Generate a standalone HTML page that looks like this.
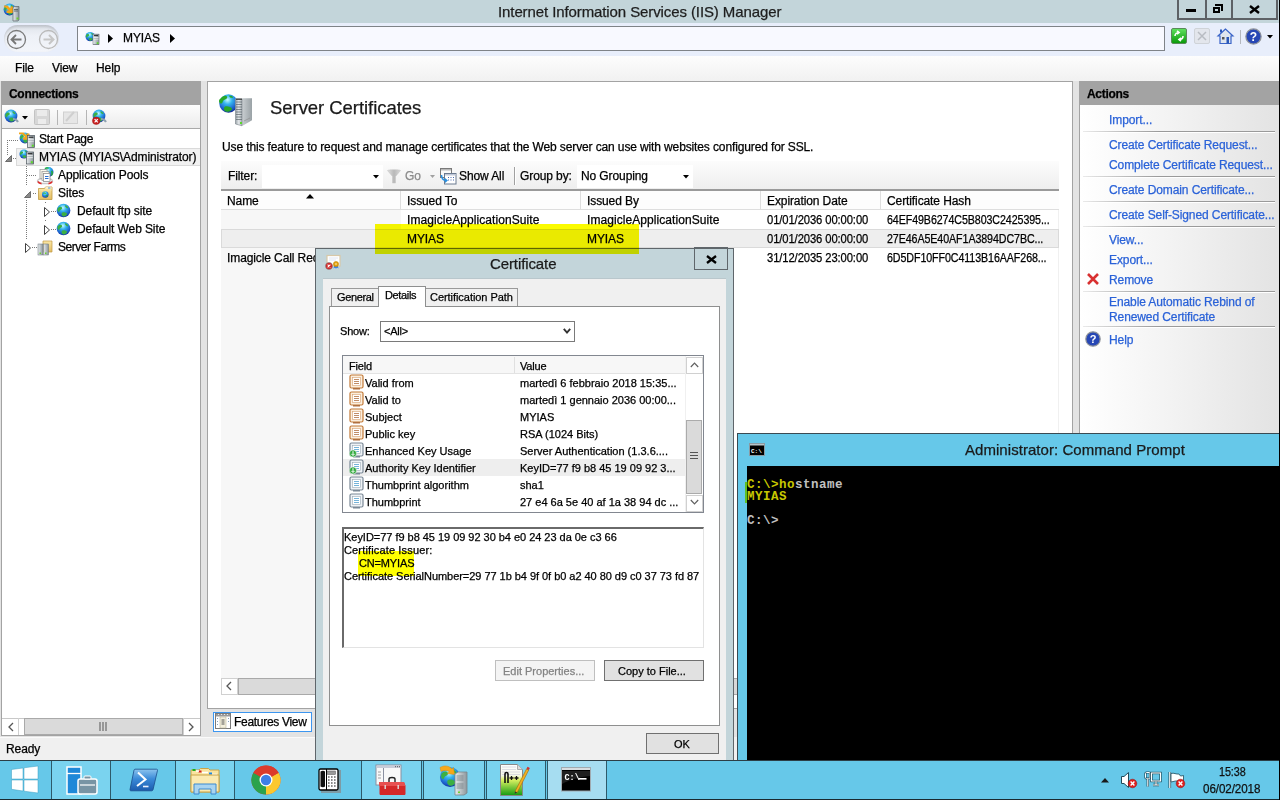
<!DOCTYPE html>
<html><head><meta charset="utf-8">
<style>
*{margin:0;padding:0;box-sizing:border-box}
html,body{width:1280px;height:800px;overflow:hidden;background:#e3e3e3;font-family:"Liberation Sans",sans-serif;font-size:12px;color:#000}
.a{position:absolute}
.t{position:absolute;white-space:nowrap;line-height:1;letter-spacing:-0.1px;-webkit-text-stroke:0.25px currentColor}
.lnk{color:#2a62d8}
svg.a{overflow:visible}
.dotv{position:absolute;width:1px;background:repeating-linear-gradient(#7a7a7a 0 1px,transparent 1px 2px)}
.doth{position:absolute;height:1px;background:repeating-linear-gradient(90deg,#7a7a7a 0 1px,transparent 1px 2px)}
</style></head><body>
<svg width="0" height="0" style="position:absolute">
<defs>
<radialGradient id="gGlobe" cx=".45" cy=".3" r=".72"><stop offset="0" stop-color="#c8fbff"/><stop offset=".35" stop-color="#34b4ee"/><stop offset=".8" stop-color="#1a58c8"/><stop offset="1" stop-color="#142c90"/></radialGradient>
<linearGradient id="gSrv" x1="0" x2="1"><stop offset="0" stop-color="#e8ecee"/><stop offset="1" stop-color="#8c969c"/></linearGradient>
<linearGradient id="gFold" x1="0" x2="0" y1="0" y2="1"><stop offset="0" stop-color="#fbe7a6"/><stop offset="1" stop-color="#e2bd62"/></linearGradient>
<symbol id="globe" viewBox="0 0 16 16">
<circle cx="8" cy="8" r="7.3" fill="url(#gGlobe)"/>
<path d="M3 4.5c1.5-1 3-.5 3.5.5s-1 2-2 2.5-.5 2-1.5 2S1.5 8 1.5 7 2 5.2 3 4.5zM7 10c1.5-.5 3.5 0 4.5 1s-.5 3-2.5 3.3S6 13 6 12s0-1.7 1-2zM10 2.5c1 .3 2.5 1.3 3 2.5s-1 .5-2 0-2-2-1-2.5z" fill="#3cb043"/>
</symbol>
<symbol id="server" viewBox="0 0 10 16"><rect x=".5" y=".5" width="9" height="15" fill="url(#gSrv)" stroke="#4e585e" stroke-width=".9"/><rect x="2" y="2" width="6" height="1.3" fill="#1a1a1a"/><path d="M1.5 5.3h7M1.5 7.5h7" stroke="#fff" stroke-width="1"/><path d="M1.5 6.4h7" stroke="#8a949a" stroke-width=".6"/><rect x="6" y="12" width="2.5" height="2.5" fill="#5ad82a"/></symbol>
<symbol id="globesrv" viewBox="0 0 16 16"><use href="#globe" x="0" y="1" width="11" height="11"/><use href="#server" x="8" y="3" width="7.5" height="13"/></symbol>
<symbol id="folder" viewBox="0 0 16 16">
<path d="M1 3h5l1.5 1.5H15V14H1z" fill="url(#gFold)" stroke="#c09a42" stroke-width=".8"/>
<path d="M1 6h14" stroke="#f7dd95" stroke-width="1"/>
</symbol>
<symbol id="tri" viewBox="0 0 6 6"><path d="M6 0V6H0z" fill="#404040"/></symbol>
<symbol id="trio" viewBox="0 0 6 10"><path d="M.5 .5L5.5 5 .5 9.5z" fill="#fff" stroke="#404040" stroke-width="1"/></symbol>
</defs></svg>

<!-- ============ TITLE BAR ============ -->
<div class="a" style="left:0;top:0;width:1280px;height:23px;background:#c3d5da"></div>
<svg class="a" style="left:2px;top:2px" width="18" height="18"><use href="#globe" x="1" y="1" width="13" height="13"/><path d="M2 3.5h3.5l3 3V4.5h2.5v6.5H4.5V8.5h2.2L3.6 5.5H2z" fill="#f2a41a"/><path d="M11 5.5l1.5-1h4.5v13.5l-1.5 1H11z" fill="url(#gSrv)" stroke="#5a656b" stroke-width=".7"/><path d="M12 7.5h4M12 9h4" stroke="#4a555b" stroke-width=".8"/><rect x="14.5" y="15.5" width="2" height="2" fill="#6bd12e"/></svg>
<div class="t" style="left:498px;top:4px;font-size:15px;color:#1e1e1e;letter-spacing:-0.1px">Internet Information Services (IIS) Manager</div>
<div class="a" style="left:1177px;top:-2px;width:101px;height:22px;border:2px solid #5d6165;border-top:none"></div>
<div class="a" style="left:1205px;top:0;width:2px;height:20px;background:#5d6165"></div>
<div class="a" style="left:1231px;top:0;width:2px;height:20px;background:#5d6165"></div>
<div class="a" style="left:1186px;top:9px;width:10px;height:3px;background:#000"></div>
<div class="a" style="left:1213px;top:7px;width:7px;height:6px;border:2px solid #000"></div>
<div class="a" style="left:1215px;top:4px;width:8px;height:7px;border-top:2px solid #000;border-right:2px solid #000"></div>
<svg class="a" style="left:1249px;top:5px" width="11" height="9"><path d="M1 1L10 8M10 1L1 8" stroke="#000" stroke-width="2.4"/></svg>


<!-- ============ NAV BAR ============ -->
<div class="a" style="left:0;top:23px;width:1279px;height:33px;background:#e8eefb"></div>
<div class="a" style="left:4px;top:25px;width:55px;height:27px;border-radius:14px;background:linear-gradient(#dfe3ea,#eef1f7 40%,#f3f5fa);box-shadow:inset 0 2px 3px rgba(120,125,135,.35)"></div>
<svg class="a" style="left:6px;top:29px" width="22" height="22"><circle cx="10.5" cy="10.5" r="9" fill="none" stroke="#7a7a7a" stroke-width="1.3"/><path d="M5.5 10.5h10M10 6l-4.5 4.5L10 15" fill="none" stroke="#777" stroke-width="1.8"/></svg>
<svg class="a" style="left:38px;top:29px" width="22" height="22"><circle cx="10.5" cy="10.5" r="9" fill="none" stroke="#b9b9b9" stroke-width="1.3"/><path d="M5.5 10.5h10M11 6l4.5 4.5L11 15" fill="none" stroke="#c6c6c6" stroke-width="2"/></svg>
<div class="a" style="left:77px;top:26px;width:1088px;height:25px;background:#f8f9ff;border:1px solid #7f8388"></div>
<svg class="a" style="left:85px;top:30px" width="15" height="16"><use href="#globesrv" width="15" height="16"/></svg>
<svg class="a" style="left:108px;top:34px" width="6" height="9"><path d="M0 0L5 4.5 0 9z" fill="#000"/></svg>
<div class="t" style="left:123px;top:32px">MYIAS</div>
<svg class="a" style="left:170px;top:34px" width="6" height="9"><path d="M0 0L5 4.5 0 9z" fill="#000"/></svg>
<!-- right nav icons -->
<div class="a" style="left:1171px;top:28px;width:16px;height:16px;border-radius:2px;background:linear-gradient(#5ee05e,#0a9a0a);border:1px solid #5a8a5a"></div>
<svg class="a" style="left:1173px;top:30px" width="12" height="12"><path d="M2 6c0-2 1.5-3.5 4-3.5M10 6c0 2-1.5 3.5-4 3.5M4 1L6 2.5 4 4M8 8L6 9.5 8 11" fill="none" stroke="#fff" stroke-width="1.6"/></svg>
<div class="a" style="left:1194px;top:28px;width:16px;height:16px;border-radius:2px;background:#e3e6ec;border:1px solid #cfd3d8"></div>
<svg class="a" style="left:1197px;top:31px" width="10" height="10"><path d="M1 1L9 9M9 1L1 9" stroke="#b8bcc2" stroke-width="1.5"/></svg>
<svg class="a" style="left:1217px;top:28px" width="17" height="16"><path d="M8.5 1L1 8h2v7.5h11V8h2z" fill="#dfe6ee" stroke="#3a64c8" stroke-width="1.2"/><rect x="5" y="9" width="2.5" height="2.5" fill="#555"/><rect x="9.5" y="9" width="2.5" height="6.5" fill="#2a58b8"/><rect x="3" y="1.5" width="2" height="3" fill="#2a58b8"/></svg>
<div class="a" style="left:1240px;top:30px;width:1px;height:14px;background:#b4b8be"></div>
<svg class="a" style="left:1245px;top:28px" width="17" height="17"><circle cx="8.5" cy="8.5" r="7.6" fill="#2747b5" stroke="#8e9298" stroke-width="1.3"/><text x="8.5" y="12.6" font-family="Liberation Sans" font-weight="bold" font-size="12" fill="#fff" text-anchor="middle">?</text></svg>
<svg class="a" style="left:1267px;top:35px" width="6" height="4"><path d="M0 0h6L3 3.5z" fill="#000"/></svg>

<!-- ============ MENU BAR ============ -->
<div class="a" style="left:0;top:56px;width:1279px;height:25px;background:linear-gradient(#fdfdfd,#f1f1f1)"></div>
<div class="t" style="left:15px;top:62px">File</div>
<div class="t" style="left:52px;top:62px">View</div>
<div class="t" style="left:96px;top:62px">Help</div>

<!-- ============ CONNECTIONS ============ -->
<div class="a" style="left:1px;top:81px;width:200px;height:655px;background:#fff;border:1px solid #a3a3a3"></div>
<div class="a" style="left:2px;top:81px;width:198px;height:24px;background:#a3a3a3"></div>
<div class="t" style="left:9px;top:88px;font-weight:bold;letter-spacing:-0.3px">Connections</div>
<div class="a" style="left:2px;top:105px;width:198px;height:24px;background:linear-gradient(#fdfdfd,#ebebeb);border-bottom:1px solid #a9a9a9"></div>
<!-- conn toolbar icons -->
<svg class="a" style="left:4px;top:109px" width="17" height="16"><use href="#globe" width="14" height="14"/><path d="M9 10c2 0 4 1 5 3" stroke="#8fa2b0" stroke-width="2" fill="none"/></svg>
<svg class="a" style="left:22px;top:116px" width="6" height="4"><path d="M0 0h6L3 3.5z" fill="#000"/></svg>
<svg class="a" style="left:34px;top:109px" width="16" height="16"><rect x=".5" y=".5" width="15" height="15" rx="1" fill="#d7d7d7" stroke="#c3c3c3"/><rect x="3" y="1" width="10" height="6" fill="#ebebeb"/><rect x="4" y="10" width="8" height="5" fill="#ececec"/></svg>
<div class="a" style="left:57px;top:110px;width:1px;height:15px;background:#b5b5b5"></div>
<svg class="a" style="left:63px;top:110px" width="15" height="14"><rect x=".5" y="2" width="14" height="11.5" fill="#e6e6e6" stroke="#d0d0d0"/><path d="M3 11l8-9" stroke="#cfcfcf" stroke-width="2"/></svg>
<div class="a" style="left:86px;top:110px;width:1px;height:15px;background:#b5b5b5"></div>
<svg class="a" style="left:92px;top:109px" width="17" height="16"><use href="#globe" width="14" height="14"/><path d="M9 10c2 0 4 1 5 3" stroke="#8fa2b0" stroke-width="2" fill="none"/><circle cx="4.2" cy="11.8" r="3.8" fill="#c81e1e" stroke="#901010" stroke-width=".4"/><path d="M2.6 10.2l3.2 3.2M5.8 10.2l-3.2 3.2" stroke="#fff" stroke-width="1.2"/></svg>

<!-- tree -->
<div class="doth" style="left:7px;top:140px;width:11px"></div>
<div class="dotv" style="left:7px;top:140px;height:16px"></div>
<svg class="a" style="left:18px;top:131px" width="17" height="17"><use href="#globe" x="1" y="1" width="12" height="12"/><path d="M1 1.5h4.5l3 3V2.5h2.8v6.3H5V6.2h2.3L4.2 3.3H1z" fill="#f2a41a"/><use href="#server" x="9" y="4" width="8" height="13"/></svg>
<div class="t" style="left:39px;top:133px;letter-spacing:-0.25px">Start Page</div>

<div class="a" style="left:16px;top:148px;width:184px;height:18px;background:#f1f1f1;border:1px solid #dadada;border-right:none"></div>
<svg class="a" style="left:5px;top:155px" width="7" height="7"><path d="M6.5 .5V6.5H.5z" fill="#8a8a8a" stroke="#555" stroke-width=".8"/></svg>
<div class="doth" style="left:13px;top:158px;width:4px"></div>
<svg class="a" style="left:19px;top:149px" width="16" height="17"><use href="#globe" x="0" y="0" width="10" height="10"/><use href="#server" x="7" y="2" width="8" height="14"/></svg>
<div class="t" style="left:39px;top:151px">MYIAS (MYIAS\Administrator)</div>

<div class="dotv" style="left:26px;top:166px;height:20px"></div>
<div class="dotv" style="left:26px;top:200px;height:39px"></div>
<div class="doth" style="left:27px;top:175px;width:10px"></div>
<svg class="a" style="left:37px;top:166px" width="17" height="18"><circle cx="11.5" cy="6" r="5" fill="url(#gGlobe)"/><path d="M8 2.5c1-.8 3-1 3.5 0M14.5 5c.8 1 1 3 0 4.5" stroke="#28b028" stroke-width="1.3" fill="none"/><ellipse cx="8" cy="15" rx="7.5" ry="2.6" fill="none" stroke="#c8c8c8" stroke-width="1.5"/><path d="M1 15.5c.5 1.3 2 2 3.5 2.2M15 15.5c-.5 1.3-2 2-3.5 2.2" stroke="#e02828" stroke-width="1.8" fill="none"/><rect x="3" y="3.5" width="7" height="9" fill="#fbf8ec" stroke="#a0a0a0" stroke-width=".8"/><rect x="5" y="5.5" width="7" height="9" fill="#fbf8ec" stroke="#a0a0a0" stroke-width=".8"/><rect x="6.5" y="7.5" width="6.5" height="8" fill="#fff" stroke="#909090" stroke-width=".8"/><path d="M8 10.5h3.5M8 12.5h3.5" stroke="#2a70d0" stroke-width="1"/></svg>
<div class="t" style="left:58px;top:169px">Application Pools</div>

<svg class="a" style="left:24px;top:191px" width="7" height="7"><path d="M6.5 .5V6.5H.5z" fill="#8a8a8a" stroke="#555" stroke-width=".8"/></svg>
<div class="doth" style="left:33px;top:193px;width:4px"></div>
<svg class="a" style="left:38px;top:185px" width="15" height="15"><path d="M.5 3.5h6l1-1.5h6.5v12.5H.5z" fill="url(#gFold)" stroke="#c09a42" stroke-width=".8"/><path d="M7.5 2h6v2h-6z" fill="#fbf0c8"/><path d="M10 3h2.5" stroke="#3a8ae0" stroke-width=".9"/><path d="M.8 5h13" stroke="#f7e4a8" stroke-width=".8"/><circle cx="7.3" cy="9.5" r="3.3" fill="url(#gGlobe)"/><path d="M5.5 8.5c.8-.8 2-.5 2 .3M7.5 11c1 0 1.8-.5 2-1" stroke="#28b028" stroke-width="1.1" fill="none"/></svg>
<div class="t" style="left:58px;top:187px">Sites</div>

<div class="dotv" style="left:45px;top:202px;height:2px"></div>
<div class="dotv" style="left:45px;top:220px;height:2px"></div>
<svg class="a" style="left:44px;top:207px" width="6" height="10"><use href="#trio" width="6" height="10"/></svg>
<div class="doth" style="left:51px;top:211px;width:5px"></div>
<svg class="a" style="left:56px;top:203px" width="15" height="15"><use href="#globe" width="15" height="15"/></svg>
<div class="t" style="left:77px;top:205px">Default ftp site</div>

<svg class="a" style="left:44px;top:225px" width="6" height="10"><use href="#trio" width="6" height="10"/></svg>
<div class="doth" style="left:51px;top:229px;width:5px"></div>
<svg class="a" style="left:56px;top:221px" width="15" height="15"><use href="#globe" width="15" height="15"/></svg>
<div class="t" style="left:77px;top:223px">Default Web Site</div>

<svg class="a" style="left:25px;top:243px" width="6" height="10"><use href="#trio" width="6" height="10"/></svg>
<div class="doth" style="left:32px;top:247px;width:5px"></div>
<svg class="a" style="left:37px;top:239px" width="16" height="16"><path d="M6 2h9v11H6z" fill="url(#gFold)" stroke="#c09a42" stroke-width=".7"/><rect x="1" y="5" width="5" height="11" fill="url(#gSrv)" stroke="#6a757b" stroke-width=".5"/><rect x="6.5" y="5" width="5" height="11" fill="url(#gSrv)" stroke="#6a757b" stroke-width=".5"/><rect x="2.5" y="13.5" width="1.5" height="1.5" fill="#6bd12e"/><rect x="8" y="13.5" width="1.5" height="1.5" fill="#6bd12e"/></svg>
<div class="t" style="left:58px;top:241px;letter-spacing:-0.45px">Server Farms</div>

<!-- conn h scrollbar -->
<div class="a" style="left:2px;top:718px;width:198px;height:17px;background:#fff;border-top:1px solid #c8c8c8"></div>
<div class="a" style="left:18px;top:718px;width:1px;height:17px;background:#d0d0d0"></div>
<div class="a" style="left:24px;top:718px;width:159px;height:17px;background:#dadada;border:1px solid #a9a9a9"></div>
<div class="a" style="left:183px;top:718px;width:1px;height:17px;background:#d0d0d0"></div>
<svg class="a" style="left:8px;top:722px" width="6" height="10"><path d="M5 1L1 5l4 4" fill="none" stroke="#555" stroke-width="1.3"/></svg>
<svg class="a" style="left:188px;top:722px" width="6" height="10"><path d="M1 1l4 4-4 4" fill="none" stroke="#555" stroke-width="1.3"/></svg>
<svg class="a" style="left:99px;top:722px" width="8" height="9"><path d="M1 0v9M4 0v9M7 0v9" stroke="#555" stroke-width="1"/></svg>
<!-- ============ MIDDLE PANEL ============ -->
<div class="a" style="left:207px;top:81px;width:866px;height:628px;background:#fff;border:1px solid #a3a3a3"></div>
<svg class="a" style="left:215px;top:90px" width="45" height="40"><defs><radialGradient id="gGlobeL" cx=".45" cy=".3" r=".7"><stop offset="0" stop-color="#c8fbff"/><stop offset=".35" stop-color="#34b4ee"/><stop offset=".8" stop-color="#1a58c8"/><stop offset="1" stop-color="#142c90"/></radialGradient><linearGradient id="gSide" x1="0" x2="1"><stop offset="0" stop-color="#e8ecee"/><stop offset="1" stop-color="#9aa2a6"/></linearGradient><linearGradient id="gFront" x1="0" x2="1"><stop offset="0" stop-color="#9aa2a8"/><stop offset=".5" stop-color="#e4e8ea"/><stop offset="1" stop-color="#a8b0b4"/></linearGradient></defs>
<circle cx="13.5" cy="13.5" r="9.2" fill="url(#gGlobeL)"/><path d="M6 8c2-2 5-3 6-1.5s-1.5 3-3 3.5-1 3-2.5 3.5-2.5-1-2.5-2.5S5 9 6 8zM10 16.5c2-.8 5 0 6.5 1.5s-1 3.5-3.5 3.8-4-1-4-2.5.3-2.2 1-2.8zM14.5 5.5c1.5 0 3 .8 3.5 1.5s-1 1-2 .8-2.5-1.8-1.5-2.3z" fill="#28a828"/>
<path d="M20.5 8.8L23 8.2h14v22l-9.5 5.6-7-1.8z" fill="url(#gSide)"/><path d="M20.5 8.8l6.5.3v26.7l-6.5-1.8z" fill="url(#gFront)" stroke="#6c767c" stroke-width=".5"/><path d="M21 9.2h6" stroke="#222" stroke-width="1"/><path d="M21 12h6M21 14.5h6M21 17h6M21 19.5h6M21 22h6M21 24.5h6M21 27h6M21 29.5h6" stroke="#5a646a" stroke-width=".7"/><rect x="25" y="32" width="2" height="2" fill="#5ad82a"/><path d="M29 31l6-3" stroke="#888" stroke-width=".6"/></svg>
<div class="t" style="left:270px;top:99px;font-size:18.5px;color:#1a1a1a;letter-spacing:-0.05px">Server Certificates</div>
<div class="t" style="left:222px;top:141px;letter-spacing:-0.125px">Use this feature to request and manage certificates that the Web server can use with websites configured for SSL.</div>

<!-- filter toolbar -->
<div class="a" style="left:221px;top:161px;width:838px;height:30px;background:linear-gradient(#fcfcfc,#eeeeee);border-bottom:2px solid #9a9a9a"></div>
<div class="t" style="left:228px;top:170px">Filter:</div>
<div class="a" style="left:262px;top:165px;width:121px;height:23px;background:#fff"></div>
<svg class="a" style="left:373px;top:175px" width="6" height="4"><path d="M0 0h6L3 3.5z" fill="#000"/></svg>
<svg class="a" style="left:387px;top:169px" width="14" height="15"><defs><linearGradient id="gFun" x1="0" x2="1"><stop offset="0" stop-color="#e0e0e0"/><stop offset=".5" stop-color="#b8b8b8"/><stop offset="1" stop-color="#d8d8d8"/></linearGradient></defs><path d="M.5 1.5c0-1 13-1 13 0L8.5 7.5v6.5h-3V7.5z" fill="url(#gFun)" stroke="#c0c0c0" stroke-width=".5"/></svg>
<div class="t" style="left:405px;top:170px;color:#8a8a8a">Go</div>
<svg class="a" style="left:430px;top:175px" width="5" height="3"><path d="M0 0h5L2.5 3z" fill="#a0a0a0"/></svg>
<svg class="a" style="left:440px;top:168px" width="17" height="17"><rect x=".5" y=".5" width="11" height="9" fill="#fafafa" stroke="#7a7a7a"/><rect x="1" y="1" width="10" height="1.5" fill="#b8b8b8"/><rect x="4.5" y="5.5" width="11.5" height="10.5" fill="#fff" stroke="#6a7a90"/><rect x="5" y="6" width="10.5" height="1.5" fill="#c0c8d8"/><path d="M8 9.5h1M10.5 9.5h1M13 9.5h1M8 12h1M10.5 12h1M13 12h1" stroke="#4a6ab0" stroke-width="1"/><path d="M1.5 7c0 3 1 5 4 5.5" fill="none" stroke="#2a90e0" stroke-width="1.6"/><path d="M5 10l3 2.5-3 2.5z" fill="#2a90e0"/></svg>
<div class="t" style="left:459px;top:170px">Show All</div>
<div class="a" style="left:514px;top:167px;width:2px;height:18px;background:linear-gradient(90deg,#a0a0a0 50%,#fff 50%)"></div>
<div class="t" style="left:520px;top:170px">Group by:</div>
<div class="a" style="left:577px;top:165px;width:116px;height:23px;background:#fff"></div>
<div class="t" style="left:581px;top:170px">No Grouping</div>
<svg class="a" style="left:683px;top:175px" width="6" height="4"><path d="M0 0h6L3 3.5z" fill="#000"/></svg>

<!-- list -->
<div class="a" style="left:221px;top:191px;width:838px;height:487px;background:#fff;border-right:1px solid #f0f0f0"></div>
<div class="a" style="left:221px;top:191px;width:838px;height:19px;background:#fdfdfd;border-bottom:1px solid #dedede"></div>
<div class="a" style="left:400px;top:191px;width:1px;height:18px;background:#dedede"></div>
<div class="a" style="left:580px;top:191px;width:1px;height:18px;background:#dedede"></div>
<div class="a" style="left:760px;top:191px;width:1px;height:18px;background:#dedede"></div>
<div class="a" style="left:880px;top:191px;width:1px;height:18px;background:#dedede"></div>
<div class="t" style="left:227px;top:195px">Name</div>
<svg class="a" style="left:306px;top:194px" width="8" height="5"><path d="M0 4.5L4 0l4 4.5z" fill="#000"/></svg>
<div class="t" style="left:407px;top:195px">Issued To</div>
<div class="t" style="left:587px;top:195px">Issued By</div>
<div class="t" style="left:767px;top:195px">Expiration Date</div>
<div class="t" style="left:887px;top:195px">Certificate Hash</div>
<!-- rows -->
<div class="a" style="left:221px;top:210px;width:180px;height:468px;background:#f7f7f7"></div>
<div class="a" style="left:221px;top:229px;width:838px;height:19px;background:#eeeeee;border:1px solid #dadada"></div>
<div class="t" style="left:407px;top:214px;letter-spacing:0.07px">ImagicleApplicationSuite</div>
<div class="t" style="left:587px;top:214px;letter-spacing:0.07px">ImagicleApplicationSuite</div>
<div class="t" style="left:767px;top:214px;transform:scaleX(0.935);transform-origin:0 0">01/01/2036 00:00:00</div>
<div class="t" style="left:887px;top:214px;transform:scaleX(0.89);transform-origin:0 0">64EF49B6274C5B803C2425395...</div>
<div class="t" style="left:407px;top:233px">MYIAS</div>
<div class="t" style="left:587px;top:233px">MYIAS</div>
<div class="t" style="left:767px;top:233px;transform:scaleX(0.935);transform-origin:0 0">01/01/2036 00:00:00</div>
<div class="t" style="left:887px;top:233px;transform:scaleX(0.89);transform-origin:0 0">27E46A5E40AF1A3894DC7BC...</div>
<div class="t" style="left:227px;top:252px">Imagicle Call Recording</div>
<div class="t" style="left:767px;top:252px;transform:scaleX(0.935);transform-origin:0 0">31/12/2035 23:00:00</div>
<div class="t" style="left:887px;top:252px;transform:scaleX(0.89);transform-origin:0 0">6D5DF10FF0C4113B16AAF268...</div>
<!-- h scroll -->
<div class="a" style="left:221px;top:678px;width:838px;height:17px;background:#fff;border-top:1px solid #c8c8c8"></div>
<div class="a" style="left:221px;top:678px;width:17px;height:17px;background:#fff;border:1px solid #d0d0d0"></div>
<div class="a" style="left:238px;top:678px;width:821px;height:17px;background:#dadada;border:1px solid #a9a9a9"></div>
<svg class="a" style="left:226px;top:681px" width="6" height="10"><path d="M5 1L1 5l4 4" fill="none" stroke="#555" stroke-width="1.3"/></svg>

<!-- features view tab -->
<div class="a" style="left:213px;top:712px;width:99px;height:20px;background:#fff;border:1px solid #3c96f0"></div>
<svg class="a" style="left:215px;top:713px" width="17" height="17"><rect x=".5" y=".5" width="15" height="15" fill="#fff" stroke="#7a7a7a"/><rect x="1" y="1" width="14" height="2.5" fill="#9a9a9a"/><path d="M3 1.5h1M6 1.5h1M9 1.5h1M12 1.5h1" stroke="#fff" stroke-width=".8"/><rect x="5" y="4" width="6" height="11" fill="#f3efdc" stroke="#b0aa90" stroke-width=".5"/><path d="M6.5 7h3M6.5 9h3M6.5 11h3" stroke="#444" stroke-width=".9"/><path d="M2.5 5v1M2.5 8v1M2.5 11v1M13.5 5v1M13.5 8v1" stroke="#6a8ab0" stroke-width=".8"/></svg>
<div class="t" style="left:234px;top:716px;letter-spacing:-0.3px">Features View</div>
<!-- ============ ACTIONS ============ -->
<div class="a" style="left:1079px;top:81px;width:200px;height:656px;background:linear-gradient(90deg,#ffffff 0%,#f3f3f3 45%,#e3e3e3 100%);border-left:1px solid #a3a3a3"></div>
<div class="a" style="left:1080px;top:81px;width:199px;height:24px;background:#a3a3a3"></div>
<div class="t" style="left:1087px;top:88px;font-weight:bold;letter-spacing:-0.3px">Actions</div>
<div class="a" style="left:1083px;top:131px;width:192px;height:2px;background:linear-gradient(90deg,rgba(150,150,150,.2),#9a9a9a 40%);border-bottom:1px solid #fff"></div>
<div class="a" style="left:1083px;top:176px;width:192px;height:2px;background:linear-gradient(90deg,rgba(150,150,150,.2),#9a9a9a 40%);border-bottom:1px solid #fff"></div>
<div class="a" style="left:1083px;top:201px;width:192px;height:2px;background:linear-gradient(90deg,rgba(150,150,150,.2),#9a9a9a 40%);border-bottom:1px solid #fff"></div>
<div class="a" style="left:1083px;top:226px;width:192px;height:2px;background:linear-gradient(90deg,rgba(150,150,150,.2),#9a9a9a 40%);border-bottom:1px solid #fff"></div>
<div class="a" style="left:1083px;top:291px;width:192px;height:2px;background:linear-gradient(90deg,rgba(150,150,150,.2),#9a9a9a 40%);border-bottom:1px solid #fff"></div>
<div class="a" style="left:1083px;top:326px;width:192px;height:2px;background:linear-gradient(90deg,rgba(150,150,150,.2),#9a9a9a 40%);border-bottom:1px solid #fff"></div>
<div class="t lnk" style="left:1109px;top:114px">Import...</div>
<div class="t lnk" style="left:1109px;top:139px">Create Certificate Request...</div>
<div class="t lnk" style="left:1109px;top:159px">Complete Certificate Request...</div>
<div class="t lnk" style="left:1109px;top:184px">Create Domain Certificate...</div>
<div class="t lnk" style="left:1109px;top:209px">Create Self-Signed Certificate...</div>
<div class="t lnk" style="left:1109px;top:234px">View...</div>
<div class="t lnk" style="left:1109px;top:254px">Export...</div>
<svg class="a" style="left:1086px;top:272px" width="14" height="14"><path d="M2 2L12 12M12 2L2 12" stroke="#d83030" stroke-width="2.6"/></svg>
<div class="t lnk" style="left:1109px;top:274px">Remove</div>
<div class="t lnk" style="left:1109px;top:296px">Enable Automatic Rebind of</div>
<div class="t lnk" style="left:1109px;top:311px">Renewed Certificate</div>
<svg class="a" style="left:1085px;top:331px" width="16" height="16"><circle cx="8" cy="8" r="7.2" fill="#2747b5" stroke="#8e9298" stroke-width="1.2"/><text x="8" y="12" font-family="Liberation Sans" font-weight="bold" font-size="11" fill="#fff" text-anchor="middle">?</text></svg>
<div class="t lnk" style="left:1109px;top:334px">Help</div>

<!-- ============ STATUS BAR ============ -->
<div class="a" style="left:0;top:736px;width:1279px;height:1px;background:#e3e3e3"></div>
<div class="a" style="left:0;top:737px;width:1279px;height:23px;background:#f0f0f0;border-top:1px solid #fafafa"></div>
<div class="t" style="left:6px;top:743px">Ready</div>

<!-- ============ TASKBAR ============ -->
<div class="a" style="left:0;top:760px;width:1280px;height:40px;background:#66c8e9;border-top:1px solid #2c3e46;border-bottom:1px solid #1a2a30"></div>
<div class="a" style="left:51px;top:761px;width:60px;height:38px;background:#7ad3ef;border-left:1px solid #2d5a6a;border-right:1px solid #2d5a6a"></div>
<div class="a" style="left:175px;top:761px;width:60px;height:38px;background:#7ad3ef;border-left:1px solid #2d5a6a;border-right:1px solid #2d5a6a"></div>
<div class="a" style="left:361px;top:761px;width:61px;height:38px;background:#7ad3ef;border-left:1px solid #2d5a6a;border-right:1px solid #2d5a6a"></div>
<div class="a" style="left:423px;top:761px;width:62px;height:38px;background:#7ad3ef;border-left:1px solid #2d5a6a;border-right:1px solid #2d5a6a"></div>
<div class="a" style="left:486px;top:761px;width:60px;height:38px;background:#7ad3ef;border-left:1px solid #2d5a6a;border-right:1px solid #2d5a6a"></div>
<div class="a" style="left:547px;top:761px;width:60px;height:38px;background:#a6ddf1;border-left:1px solid #2d5a6a;border-right:1px solid #2d5a6a"></div>
<!-- start logo -->
<svg class="a" style="left:11px;top:766px" width="28" height="27"><path d="M.5 3.5L12 2v11H.5zM13 1.8L27 0v13H13zM.5 14H12v11L.5 23.3zM13 14h14v13l-14-1.8z" fill="#fff" stroke="#3a9cc0" stroke-width=".5"/></svg>
<!-- server manager -->
<svg class="a" style="left:66px;top:766px" width="32" height="30"><rect x="1" y="1" width="14" height="27" fill="#1e88d8" stroke="#fff" stroke-width="1.5"/><path d="M1 7.5h14" stroke="#fff" stroke-width="1.3"/><rect x="12" y="13" width="19" height="15" rx="2" fill="#7894a4" stroke="#fff" stroke-width="1.5"/><rect x="18" y="10" width="7" height="3" rx="1" fill="#7894a4" stroke="#fff"/><path d="M14 19h15" stroke="#fff" stroke-width="1.2"/></svg>
<!-- powershell -->
<svg class="a" style="left:129px;top:768px" width="30" height="24"><defs><linearGradient id="gPS" x1="0" y1="0" x2="0" y2="1"><stop offset="0" stop-color="#8cc4ee"/><stop offset=".45" stop-color="#3a8ad8"/><stop offset="1" stop-color="#1c5cae"/></linearGradient></defs><path d="M6 1.2h21.5c.8 0 1.2.5 1 1.2L24 21.8c-.2.6-.7 1-1.3 1H2c-.8 0-1.2-.5-1-1.2L5 2.2c.2-.6.5-1 1-1z" fill="url(#gPS)" stroke="#1a4c8c" stroke-width=".8"/><path d="M9 4.5l7.5 7L8 18" fill="none" stroke="#fff" stroke-width="2"/><path d="M14 18.5h5.5" stroke="#e8f0ff" stroke-width="1.6"/></svg>
<!-- explorer -->
<svg class="a" style="left:189px;top:766px" width="32" height="30"><path d="M2 4h8l1.5-1.5h8L21 4h9v22H2z" fill="#f9e4a0" stroke="#c9a346" stroke-width="1"/><rect x="3.5" y="3" width="3" height="2" fill="#1cb01c"/><rect x="9.5" y="4.5" width="3" height="2" fill="#d82020"/><rect x="20" y="6.5" width="3" height="2" fill="#1a88e8"/><path d="M7 5h3M13 6.5h6M23 8.5h5" stroke="#fff" stroke-width="1.5"/><path d="M2 9h28v17H2z" fill="#fbeab0" stroke="#c9a346" stroke-width="1"/><path d="M5 28V18h22v10h-5v-5H10v5z" fill="#a8d4f0" stroke="#3a8ad0" stroke-width="1"/></svg>
<!-- chrome -->
<svg class="a" style="left:251px;top:765px" width="30" height="30"><circle cx="15" cy="15" r="14.5" fill="#db3b2c"/><path d="M15 15L2.4 7.7A14.5 14.5 0 0 0 15 29.5z" fill="#2ba24c"/><path d="M15 15l12.6-7.3A14.5 14.5 0 0 1 15 29.5z" fill="#fbc82f"/><path d="M15 15L27.6 7.7A14.5 14.5 0 0 0 2.4 7.7z" fill="#db3b2c"/><circle cx="15" cy="15" r="6.5" fill="#fff"/><circle cx="15" cy="15" r="5.2" fill="#3e7ee6"/></svg>
<!-- phone -->
<svg class="a" style="left:318px;top:768px" width="23" height="25"><rect x="3" y="2" width="20" height="23" fill="#888" opacity=".7"/><rect x="1" y="1" width="19" height="21" rx="1.5" fill="#fff" stroke="#000" stroke-width="1.3"/><path d="M2.5 3.5c1.5-1 3.5-1 4.5 0v15c-1 1-3 1-4.5 0z" fill="#111"/><rect x="9.5" y="3" width="8" height="3.5" fill="#9a9a9a" stroke="#555" stroke-width=".5"/><path d="M10 9h1.6M13 9h1.6M16 9h1.6M10 12h1.6M13 12h1.6M16 12h1.6M10 15h1.6M13 15h1.6M16 15h1.6M10 18h1.6M13 18h1.6M16 18h1.6" stroke="#666" stroke-width="1.6"/><rect x="8" y="1" width="1" height="21" fill="#000"/></svg>
<!-- toolbox -->
<svg class="a" style="left:375px;top:764px" width="34" height="32"><rect x="1" y="1" width="25" height="20" fill="#f8f8f8" stroke="#8a90a0" stroke-width="1"/><rect x="1.5" y="1.5" width="24" height="2.5" fill="#c8ccd8"/><path d="M20 2.7h1M22 2.7h1M24 2.7h1" stroke="#555" stroke-width="1"/><rect x="8" y="4" width="1" height="17" fill="#8a90a0"/><path d="M3 8h3M3 11h3M3 14h3" stroke="#888" stroke-width=".8"/><path d="M14 18v-3c0-2 6-2 6 0v3" stroke="#222" stroke-width="1.4" fill="none"/><path d="M4 18h25l1.5 4v7.5c0 1-.5 1.5-1.5 1.5H6c-1 0-1.5-.5-1.5-1.5V22z" fill="#d42828"/><path d="M4 18h25l1.5 4H4z" fill="#e85050"/><rect x="9.5" y="21" width="1.4" height="4" fill="#ddd"/><rect x="22.5" y="21" width="1.4" height="4" fill="#ddd"/></svg>
<!-- iis -->
<svg class="a" style="left:438px;top:764px" width="32" height="32"><use href="#globe" x="1" y="2" width="22" height="22"/><path d="M2 3.5c4-2.5 9-2 12 1.5l1.5-1.5 1 7-7-1 1.8-1.8C9 6 5.5 6 3 7.5z" fill="#f6a81a" stroke="#d88a10" stroke-width=".5"/><path d="M17 10l3-2h9v21l-3 2h-9z" fill="url(#gSrv)" stroke="#7a858b" stroke-width=".8"/><path d="M18.5 12h7M18.5 14h7M18.5 16h7M18.5 20h7M18.5 22h7M18.5 24h7" stroke="#6c767c" stroke-width=".7"/><rect x="20" y="27.5" width="2" height="1.5" fill="#6bd12e"/></svg>
<!-- notepad++ -->
<svg class="a" style="left:499px;top:763px" width="32" height="34"><defs><linearGradient id="gNP" x1="0" y1="0" x2="0" y2="1"><stop offset="0" stop-color="#fff"/><stop offset=".35" stop-color="#f4f8e8"/><stop offset=".5" stop-color="#d8f060"/><stop offset="1" stop-color="#129a12"/></linearGradient></defs><path d="M1.5 1.5h17l5 5v26h-22z" fill="url(#gNP)" stroke="#888" stroke-width="1"/><path d="M3 4h14M3 6.5h14M3 9h18M3 11.5h18" stroke="#c8c8d8" stroke-width=".6"/><path d="M18.5 1.5v5h5" fill="#ddd" stroke="#999" stroke-width=".8"/><path d="M6 20V11c0-2 3-2 3 0v9" stroke="#111" stroke-width="1.6" fill="none"/><path d="M10.5 15h4M12.5 13v4M15.5 15h4M17.5 13v4" stroke="#111" stroke-width="1.3"/><path d="M16 28.5L27.5 6l2.2 1.1L18.2 29.6z" fill="#f2b020" stroke="#9a6a10" stroke-width=".6"/><path d="M27.5 6l1-2.3 2.4 1.2-1.2 2.2z" fill="#d03030"/><path d="M16 28.5l-.3 2.2 2.5-1.1z" fill="#333"/></svg>
<!-- cmd -->
<svg class="a" style="left:561px;top:767px" width="30" height="25"><rect x=".5" y=".5" width="29" height="23.5" fill="#000" stroke="#a0aab0"/><rect x="1" y="1" width="28" height="2" fill="#d8dde0"/><text x="3.5" y="12.5" font-family="Liberation Mono" font-weight="bold" font-size="8.5" fill="#fff">C:\</text><rect x="17.5" y="11" width="8" height="1.6" fill="#fff"/><path d="M1 4h28L29 9C18 10 8 13 1 17z" fill="#fff" opacity=".12"/></svg>
<!-- tray -->
<svg class="a" style="left:1101px;top:778px" width="8" height="5"><path d="M0 4.5L4 0l4 4.5z" fill="#1a1a1a"/></svg>
<svg class="a" style="left:1120px;top:771px" width="18" height="18"><path d="M1.5 5.5h2.5L8.5 1.5v15L4 12.5H1.5z" fill="#fff" stroke="#1e4a5a" stroke-width="1"/><circle cx="12.5" cy="12.5" r="4.3" fill="#e02020" stroke="#8a1010" stroke-width=".5"/><path d="M10.6 10.6l3.8 3.8M14.4 10.6l-3.8 3.8" stroke="#fff" stroke-width="1.4"/></svg>
<svg class="a" style="left:1144px;top:771px" width="18" height="17"><rect x="1.5" y="1.5" width="4.5" height="6" rx="1" fill="none" stroke="#1e4a5a" stroke-width="2.2"/><rect x="1.5" y="1.5" width="4.5" height="6" rx="1" fill="none" stroke="#fff" stroke-width="1"/><path d="M3.8 7.5v8" stroke="#1e4a5a" stroke-width="2.4"/><path d="M3.8 7.5v8" stroke="#fff" stroke-width="1.1"/><rect x="7.5" y="2" width="9" height="8" fill="none" stroke="#1e4a5a" stroke-width="2.4"/><rect x="7.5" y="2" width="9" height="8" fill="none" stroke="#fff" stroke-width="1.1"/><path d="M9 14h6M12 10v4" stroke="#1e4a5a" stroke-width="2.4"/><path d="M9 14h6M12 10v4" stroke="#fff" stroke-width="1.1"/></svg>
<svg class="a" style="left:1168px;top:771px" width="18" height="18"><path d="M1.8 1v16" stroke="#1e4a5a" stroke-width="2.6"/><path d="M1.8 1v16" stroke="#fff" stroke-width="1.2"/><path d="M3 2.5c3-1 5 1 8 .5l1.5 2c1 0 2-.3 3-.5v6c-3 1-5-1-8-.5L3 11z" fill="#fff" stroke="#1e4a5a" stroke-width=".8"/><circle cx="12.5" cy="12.5" r="4.3" fill="#e02020" stroke="#8a1010" stroke-width=".5"/><path d="M10.6 10.6l3.8 3.8M14.4 10.6l-3.8 3.8" stroke="#fff" stroke-width="1.4"/></svg>
<div class="t" style="left:1219px;top:766px;font-size:12px;color:#111;transform:scaleX(0.9);transform-origin:0 0">15:38</div>
<div class="t" style="left:1203px;top:783px;font-size:12px;color:#111;transform:scaleX(0.97);transform-origin:0 0">06/02/2018</div>
<!-- ============ CERT DIALOG ============ -->
<div class="a" style="left:315px;top:248px;width:419px;height:512px;background:#c3d5da;border:1px solid #5f666b;border-bottom:none"></div>
<svg class="a" style="left:325px;top:254px" width="16" height="16"><rect x="2" y="1.5" width="13" height="10.5" fill="#fff" stroke="#d8c8a8" stroke-width="1.2"/><path d="M4 4h9M4 6h7" stroke="#d8dff0" stroke-width=".8"/><path d="M9.3 11.5l-.8 3 1.5-1 .8 1.2.5-3M12.7 11.5l.8 3-1.5-1-.8 1.2-.5-3" fill="#2a78e8"/><circle cx="11" cy="10" r="2.6" fill="#e0a010" stroke="#c08000" stroke-width=".5"/><circle cx="11" cy="10" r=".8" fill="#fff8c0"/><circle cx="4" cy="12" r="3.5" fill="#d42020" stroke="#888" stroke-width=".7"/><path d="M2.6 10.6l2.8 2.8M5.4 10.6l-2.8 2.8" stroke="#fff" stroke-width="1.1"/></svg>
<div class="t" style="left:490px;top:256px;font-size:15px;color:#1a1a1a">Certificate</div>
<div class="a" style="left:694px;top:247px;width:34px;height:23px;border:1px solid #5f666b"></div>
<svg class="a" style="left:706px;top:255px" width="11" height="9"><path d="M1 1L10 8M10 1L1 8" stroke="#000" stroke-width="2.3"/></svg>
<div class="a" style="left:323px;top:278px;width:403px;height:482px;background:#f0f0f0;border-top:1px solid #b9c7cc"></div>

<!-- tabs -->
<div class="a" style="left:331px;top:288px;width:48px;height:19px;background:#f0f0f0;border:1px solid #9a9a9a;border-bottom:none"></div>
<div class="a" style="left:425px;top:288px;width:93px;height:19px;background:#f0f0f0;border:1px solid #9a9a9a;border-bottom:none"></div>
<div class="a" style="left:329px;top:306px;width:391px;height:420px;background:#fff;border:1px solid #8e8f8f"></div>
<div class="a" style="left:378px;top:286px;width:48px;height:21px;background:#fff;border:1px solid #8e8f8f;border-bottom:none"></div>
<div class="t" style="left:337px;top:292px;font-size:11px;letter-spacing:-0.35px">General</div>
<div class="t" style="left:385px;top:290px;font-size:11px;letter-spacing:-0.35px">Details</div>
<div class="t" style="left:430px;top:292px;font-size:11px;letter-spacing:-0.05px">Certification Path</div>

<div class="t" style="left:340px;top:326px;font-size:11px;letter-spacing:-0.2px">Show:</div>
<div class="a" style="left:380px;top:321px;width:195px;height:21px;background:#fff;border:1px solid #7a7a7a"></div>
<div class="t" style="left:384px;top:326px;font-size:11px;letter-spacing:-0.2px">&lt;All&gt;</div>
<svg class="a" style="left:563px;top:328px" width="8" height="6"><path d="M.8 .8L4 4.5 7.2 .8" fill="none" stroke="#333" stroke-width="1.9"/></svg>

<!-- field list -->
<div class="a" style="left:342px;top:355px;width:362px;height:158px;background:#fff;border:1px solid #828790"></div>
<div class="a" style="left:343px;top:356px;width:342px;height:18px;background:#f7f7f7;border-bottom:1px solid #e3e3e3"></div>
<div class="a" style="left:514px;top:357px;width:1px;height:16px;background:#e0e0e0"></div>
<div class="t" style="left:349px;top:361px;font-size:11px;letter-spacing:-0.2px">Field</div>
<div class="t" style="left:520px;top:361px;font-size:11px;letter-spacing:-0.2px">Value</div>
<div class="a" style="left:343px;top:459px;width:342px;height:17px;background:#eeeeee"></div>
<!-- scrollbar -->
<div class="a" style="left:685px;top:356px;width:18px;height:156px;background:#fff;border-left:1px solid #f0f0f0"></div>
<div class="a" style="left:686px;top:357px;width:17px;height:17px;border:1px solid #d0d0d0;background:#fff"></div>
<div class="a" style="left:686px;top:495px;width:17px;height:17px;border:1px solid #d0d0d0;background:#fff"></div>
<svg class="a" style="left:690px;top:362px" width="9" height="6"><path d="M.8 5L4.5 1.2 8.2 5" fill="none" stroke="#606060" stroke-width="1.2"/></svg>
<div class="a" style="left:686px;top:420px;width:16px;height:74px;background:#dadada;border:1px solid #ababab"></div>
<svg class="a" style="left:690px;top:452px" width="8" height="7"><path d="M0 .5h8M0 3.5h8M0 6.5h8" stroke="#555" stroke-width="1"/></svg>
<svg class="a" style="left:690px;top:499px" width="9" height="6"><path d="M.8 1L4.5 4.8 8.2 1" fill="none" stroke="#606060" stroke-width="1.2"/></svg>
<!-- rows -->
<svg width="0" height="0" style="position:absolute"><defs>
<symbol id="cdoc" viewBox="0 0 15 16"><rect x="1" y="1" width="13" height="13" rx="1.5" fill="#fbeedd" stroke="#c27a38" stroke-width="1.2"/><rect x="3.5" y="3.5" width="8" height="8" fill="#fff" stroke="#d8a070" stroke-width=".6"/><path d="M5 5.5h5M5 7.5h5M5 9.5h5" stroke="#b07040" stroke-width=".8"/><rect x="4" y="14" width="7" height="1.5" fill="#b07040"/></symbol>
<symbol id="cdocg" viewBox="0 0 15 16"><rect x="1" y="1" width="13" height="13" rx="1.5" fill="#eef2f6" stroke="#7a8896" stroke-width="1.2"/><rect x="3.5" y="3.5" width="8" height="8" fill="#fff" stroke="#9aa8b6" stroke-width=".6"/><path d="M5 5.5h5M5 7.5h5M5 9.5h5" stroke="#50a0d0" stroke-width=".8"/><rect x="4" y="14" width="7" height="1.5" fill="#7a8896"/></symbol>
<symbol id="cdocd" viewBox="0 0 15 16"><use href="#cdocg"/><circle cx="4" cy="11.5" r="3.6" fill="#2ea83a" stroke="#fff" stroke-width=".6"/><path d="M4 9.2v4M2.3 11.8L4 13.5l1.7-1.7" fill="none" stroke="#fff" stroke-width="1"/></symbol>
</defs></svg>
<svg class="a" style="left:349px;top:374px" width="15" height="16"><use href="#cdoc"/></svg>
<svg class="a" style="left:349px;top:391px" width="15" height="16"><use href="#cdoc"/></svg>
<svg class="a" style="left:349px;top:408px" width="15" height="16"><use href="#cdoc"/></svg>
<svg class="a" style="left:349px;top:425px" width="15" height="16"><use href="#cdoc"/></svg>
<svg class="a" style="left:349px;top:442px" width="15" height="16"><use href="#cdocd"/></svg>
<svg class="a" style="left:349px;top:459px" width="15" height="16"><use href="#cdocd"/></svg>
<svg class="a" style="left:349px;top:476px" width="15" height="16"><use href="#cdocg"/></svg>
<svg class="a" style="left:349px;top:493px" width="15" height="16"><use href="#cdocg"/></svg>
<div class="t" style="left:365px;top:378px;font-size:11px;letter-spacing:0px">Valid from</div>
<div class="t" style="left:365px;top:395px;font-size:11px;letter-spacing:0px">Valid to</div>
<div class="t" style="left:365px;top:412px;font-size:11px;letter-spacing:0px">Subject</div>
<div class="t" style="left:365px;top:429px;font-size:11px;letter-spacing:0px">Public key</div>
<div class="t" style="left:365px;top:446px;font-size:11px;letter-spacing:0px">Enhanced Key Usage</div>
<div class="t" style="left:365px;top:463px;font-size:11px;letter-spacing:0px">Authority Key Identifier</div>
<div class="t" style="left:365px;top:480px;font-size:11px;letter-spacing:0px">Thumbprint algorithm</div>
<div class="t" style="left:365px;top:497px;font-size:11px;letter-spacing:0px">Thumbprint</div>
<div class="t" style="left:520px;top:378px;font-size:11px;letter-spacing:0px">martedì 6 febbraio 2018 15:35...</div>
<div class="t" style="left:520px;top:395px;font-size:11px;letter-spacing:0px">martedì 1 gennaio 2036 00:00...</div>
<div class="t" style="left:520px;top:412px;font-size:11px;letter-spacing:0px">MYIAS</div>
<div class="t" style="left:520px;top:429px;font-size:11px;letter-spacing:0px">RSA (1024 Bits)</div>
<div class="t" style="left:520px;top:446px;font-size:11px;letter-spacing:0px">Server Authentication (1.3.6....</div>
<div class="t" style="left:520px;top:463px;font-size:11px;letter-spacing:0px">KeyID=77 f9 b8 45 19 09 92 3...</div>
<div class="t" style="left:520px;top:480px;font-size:11px;letter-spacing:0px">sha1</div>
<div class="t" style="left:520px;top:497px;font-size:11px;letter-spacing:0px">27 e4 6a 5e 40 af 1a 38 94 dc ...</div>

<!-- detail text -->
<div class="a" style="left:342px;top:527px;width:362px;height:121px;background:#fff;border:1px solid #e3e3e3;border-left:2px solid #6a6a6a;border-top:2px solid #6a6a6a"></div>
<div class="t" style="left:344px;top:532px;font-size:11px;letter-spacing:-0.03px">KeyID=77 f9 b8 45 19 09 92 30 b4 e0 24 23 da 0e c3 66</div>
<div class="t" style="left:344px;top:545px;font-size:11px;letter-spacing:0.15px">Certificate Issuer:</div>
<div class="t" style="left:359px;top:558px;font-size:11px;letter-spacing:-0.15px">CN=MYIAS</div>
<div class="t" style="left:344px;top:571px;font-size:11px;letter-spacing:-0.04px">Certificate SerialNumber=29 77 1b b4 9f 0f b0 a2 40 80 d9 c0 37 73 fd 87</div>
<div class="a" style="left:358px;top:551px;width:56px;height:25px;background:#ffff00;mix-blend-mode:multiply"></div>

<!-- buttons -->
<div class="a" style="left:495px;top:660px;width:100px;height:21px;background:#f4f4f4;border:1px solid #bfbfbf"></div>
<div class="t" style="left:503px;top:666px;font-size:11px;letter-spacing:0px;color:#838383">Edit Properties...</div>
<div class="a" style="left:604px;top:660px;width:100px;height:21px;background:#e1e1e1;border:1px solid #707070"></div>
<div class="t" style="left:618px;top:666px;font-size:11px;letter-spacing:0px">Copy to File...</div>
<div class="a" style="left:646px;top:733px;width:73px;height:21px;background:#e1e1e1;border:1px solid #707070"></div>
<div class="t" style="left:674px;top:739px;font-size:11px">OK</div>

<!-- strip between dialog and cmd -->
<div class="a" style="left:734px;top:433px;width:3px;height:327px;background:#fff"></div>
<div class="a" style="left:734px;top:678px;width:3px;height:17px;background:#d8d8d8;border-top:1px solid #aaa;border-bottom:1px solid #aaa"></div>
<div class="a" style="left:734px;top:708px;width:3px;height:29px;background:#e3e3e3;border-top:1px solid #a3a3a3"></div>
<div class="a" style="left:734px;top:737px;width:3px;height:23px;background:#f0f0f0"></div>

<!-- ============ CMD ============ -->
<div class="a" style="left:737px;top:433px;width:543px;height:327px;background:#66c8e9;border-top:1px solid #3a4a52;border-left:1px solid #3a4a52"></div>
<svg class="a" style="left:749px;top:443px" width="16" height="13"><rect x=".5" y=".5" width="15" height="12" fill="#000" stroke="#8a9aa2"/><rect x="1" y="1" width="14" height="1.5" fill="#b8c4c8"/><text x="2" y="10" font-family="Liberation Mono" font-size="6" font-weight="bold" fill="#fff">C:\</text></svg>
<div class="t" style="left:965px;top:442px;font-size:15px;color:#1a1a1a;letter-spacing:0.05px">Administrator: Command Prompt</div>
<div class="a" style="left:747px;top:466px;width:533px;height:294px;background:#000"></div>
<div class="a" style="left:745px;top:482px;width:2px;height:21px;background:#60c020"></div>
<div class="t" style="left:747px;top:479px;font-family:'Liberation Mono',monospace;font-weight:bold;font-size:12.5px;letter-spacing:0.5px;color:#c0c0c0;line-height:12px;-webkit-text-stroke:0"><span style="color:#c8c800">C:\&gt;ho</span>stname<br><span style="color:#c8c800">MYIAS</span><br><br>C:\&gt;</div>

<!-- annotation highlight over list -->
<div class="a" style="left:375px;top:224px;width:264px;height:30px;background:#fbfb00;mix-blend-mode:multiply"></div>
<div class="a" style="left:1279px;top:0;width:1px;height:800px;background:#000"></div>
</body></html>
